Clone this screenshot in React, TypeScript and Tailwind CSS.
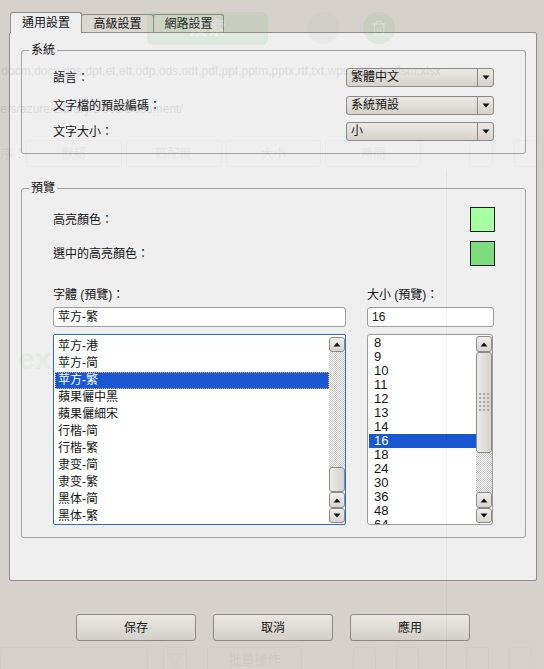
import { Filter, Trash2 } from "lucide-react"

const fonts = [
  "苹方-港",
  "苹方-简",
  "苹方-繁",
  "蘋果儷中黑",
  "蘋果儷細宋",
  "行楷-简",
  "行楷-繁",
  "隶变-简",
  "隶变-繁",
  "黑体-简",
  "黑体-繁",
]

const sizes = ["8", "9", "10", "11", "12", "13", "14", "16", "18", "24", "30", "36", "48", "64"]

function Tri({ up = false }: { up?: boolean }) {
  return (
    <svg width="8" height="5" viewBox="0 0 8 5">
      <path d={up ? "M0.5 4.5H7.5L4 0.5Z" : "M0.5 0.5H7.5L4 4.5Z"} fill="#111" />
    </svg>
  )
}

function ArrowBtn({ up = false, className = "" }: { up?: boolean; className?: string }) {
  return (
    <div
      className={`flex items-center justify-center rounded-[3px] border border-[#8a8a8a] bg-gradient-to-b from-[#f1efeb] to-[#d9d5ce] ${className}`}
    >
      <Tri up={up} />
    </div>
  )
}

function Combo({ value }: { value: string }) {
  return (
    <div className="flex h-[19px] w-[148px] rounded-[3px] border border-[#8a8a8a] bg-gradient-to-b from-[#ebe8e3] to-[#d7d3cb]">
      <div className="flex-1 pl-[4px] leading-[17px]">{value}</div>
      <div className="flex w-[16px] items-center justify-center border-l border-[#8a8a8a]">
        <Tri />
      </div>
    </div>
  )
}

function GroupBox({ title, className, children }: { title: string; className: string; children: React.ReactNode }) {
  return (
    <div className={`relative ml-[11px] w-[505px] rounded-[3px] border border-[#a2a2a2] ${className}`}>
      {/* title sits on the border line */}
      <span className="absolute -top-[9px] left-[7px] bg-[#efefef] px-[2px] leading-[16px]">{title}</span>
      {children}
    </div>
  )
}

const hatch =
  "bg-[image:repeating-conic-gradient(#c8c8c8_0%_25%,#f6f6f6_0%_50%)] bg-[length:2px_2px]"

function Ghost() {
  return (
    <div className="pointer-events-none absolute inset-0 z-20">
      {/* faded app behind the dialog */}
      <div className="absolute left-[147px] top-[12px] flex h-[33px] w-[121px] items-center justify-center rounded-[6px] bg-[#52b352] text-[18px] font-bold text-white opacity-[0.1]">
        搜索
      </div>
      <div className="absolute left-[307px] top-[12px] h-[32px] w-[32px] rounded-full bg-[#9c9c9c] opacity-[0.07]" />
      <div className="absolute left-[363px] top-[12px] flex h-[32px] w-[32px] items-center justify-center rounded-full bg-[#52b352] opacity-[0.1]">
        <Trash2 size={16} color="#fff" />
      </div>
      <div className="absolute left-[-2px] top-[62px] whitespace-nowrap text-[12px] text-[#555] opacity-[0.12]">
        ,docm,docx,dps,dpt,et,ett,odp,ods,odt,pdf,ppt,pptm,pptx,rtf,txt,wps,wpt,xls,xlsm,xlsx
      </div>
      <div className="absolute left-0 top-[100px] whitespace-nowrap text-[12px] text-[#555] opacity-[0.12]">
        ers/azure/Library/Docu/Document/
      </div>
      <div className="absolute left-0 top-[140px] flex h-[27px] w-[544px] items-center opacity-[0.06]">
        <span className="w-[26px] text-[13px] text-[#444]">序：</span>
        <div className="flex h-[27px] w-[96px] items-center justify-center rounded-[3px] border border-[#999] text-[#444]">默認</div>
        <div className="ml-[4px] flex h-[27px] w-[96px] items-center justify-center rounded-[3px] border border-[#999] text-[#444]">匹配度</div>
        <div className="ml-[4px] flex h-[27px] w-[96px] items-center justify-center rounded-[3px] border border-[#999] text-[#444]">大小</div>
        <div className="ml-[4px] flex h-[27px] w-[96px] items-center justify-center rounded-[3px] border border-[#999] text-[#444]">時間</div>
        <div className="ml-[48px] h-[27px] w-[24px] rounded-[3px] border border-[#999]" />
        <div className="ml-[21px] h-[27px] w-[30px] rounded-[3px] border border-[#999]" />
      </div>
      <div className="absolute left-[446px] top-[170px] h-[499px] w-px bg-[#000] opacity-[0.04]" />
      <div className="absolute left-[18px] top-[336px] text-[30px] font-bold text-[#4caf50] opacity-[0.06]">extS</div>
      <div className="absolute left-0 top-[647px] flex h-[26px] w-[544px] items-start opacity-[0.08]">
        <div className="h-[26px] w-[148px] rounded-[3px] border border-[#999]" />
        <div className="ml-[15px] flex h-[26px] w-[24px] items-center justify-center rounded-[3px] border border-[#999]">
          <Filter size={16} color="#777" strokeWidth={1.2} />
        </div>
        <div className="ml-[20px] flex h-[26px] w-[95px] items-center justify-center rounded-[3px] border border-[#999] text-[13px] text-[#555]">
          批量操作
        </div>
        <div className="ml-[51px] h-[26px] w-[23px] rounded-[3px] border border-[#999]" />
        <div className="ml-[20px] h-[26px] w-[23px] rounded-[3px] border border-[#999]" />
        <div className="ml-[47px] h-[26px] w-[23px] rounded-[3px] border border-[#999]" />
        <div className="ml-[20px] h-[26px] w-[23px] rounded-[3px] border border-[#999]" />
      </div>
    </div>
  )
}

export default function App() {
  return (
    <div className="relative h-[669px] w-[544px] overflow-hidden bg-[#d6d2cb] font-['Liberation_Sans','Noto_Sans_CJK_TC',sans-serif] text-[12px] text-[#151515]">
      {/* tabs */}
      <div className="flex h-[32px] items-end pl-[10px]">
        <div className="relative z-10 -mb-px flex h-[21px] w-[72px] items-center justify-center rounded-t-[3px] border-x border-t border-[#8a8a8a] bg-[#efefef] pb-[1px]">
          通用設置
        </div>
        <div className="-ml-px flex h-[18px] w-[73px] items-center justify-center rounded-t-[3px] border-x border-t border-[#8a8a8a] bg-[#dbd7d1]">
          高級設置
        </div>
        <div className="-ml-px flex h-[18px] w-[71px] items-center justify-center rounded-t-[3px] border-x border-t border-[#8a8a8a] bg-[#dbd7d1]">
          網路設置
        </div>
      </div>

      {/* panel */}
      <div className="ml-[9px] h-[549px] w-[528px] rounded-[2px] border border-[#8e8e8e] bg-[#efefef]">
        <GroupBox title="系統" className="mt-[17px] h-[104px]">
          <div className="pl-[31px] pr-[31px] pt-[17px]">
            <div className="flex h-[19px] items-center justify-between">
              <span>語言：</span>
              <Combo value="繁體中文" />
            </div>
            <div className="mt-[9px] flex h-[19px] items-center justify-between">
              <span>文字檔的預設編碼：</span>
              <Combo value="系統預設" />
            </div>
            <div className="mt-[7px] flex h-[19px] items-center justify-between">
              <span>文字大小：</span>
              <Combo value="小" />
            </div>
          </div>
        </GroupBox>

        <GroupBox title="預覽" className="mt-[34px] h-[350px]">
          <div className="pl-[31px] pr-[30px] pt-[18px]">
            <div className="flex h-[25px] items-center justify-between">
              <span>高亮顏色：</span>
              <div className="h-[25px] w-[25px] border border-[#1c1c1c] bg-[#a6ffa2]" />
            </div>
            <div className="mt-[9px] flex h-[25px] items-center justify-between">
              <span>選中的高亮顏色：</span>
              <div className="h-[25px] w-[25px] border border-[#1c1c1c] bg-[#7edb7e]" />
            </div>

            <div className="mt-[21px] flex gap-[21px]">
              {/* font column */}
              <div className="flex w-[293px] flex-col">
                <div className="h-[16px] leading-[16px]">字體 (預覽)：</div>
                <div className="mt-[4px] h-[20px] rounded-[3px] border border-[#9c9c9c] bg-white pl-[4px] leading-[18px]">
                  苹方-繁
                </div>
                <div className="mt-[7px] flex h-[191px] rounded-[2px] border border-[#3568cf] bg-white">
                  <div className="flex-1 overflow-hidden pl-px pt-[3px]">
                    {fonts.map((f, i) =>
                      i === 2 ? (
                        <div
                          key={f}
                          className="h-[17px] bg-[#1a58d1] pl-[3px] leading-[17px] text-white outline-1 -outline-offset-1 outline-dotted outline-[#e8b34a]"
                        >
                          {f}
                        </div>
                      ) : (
                        <div key={f} className="h-[17px] pl-[3px] leading-[17px]">
                          {f}
                        </div>
                      )
                    )}
                  </div>
                  <div className="flex w-[16px] flex-col pb-[1px] pt-[2px]">
                    <ArrowBtn up className="h-[15px]" />
                    <div className={`flex-1 ${hatch}`} />
                    <div className="h-[25px] rounded-[3px] border border-[#8a8a8a] bg-gradient-to-r from-[#ecebe7] to-[#d6d2cb]" />
                    <ArrowBtn up className="h-[16px]" />
                    <ArrowBtn className="h-[15px]" />
                  </div>
                </div>
              </div>

              {/* size column */}
              <div className="flex w-[127px] flex-col">
                <div className="h-[16px] leading-[16px]">大小 (預覽)：</div>
                <div className="mt-[4px] h-[20px] rounded-[3px] border border-[#9c9c9c] bg-white pl-[4px] leading-[18px]">
                  16
                </div>
                <div className="mt-[7px] flex h-[191px] w-[126px] rounded-[3px] border border-[#9c9c9c] bg-white">
                  <div className="flex-1 overflow-hidden pl-px pt-px">
                    {sizes.map((s) =>
                      s === "16" ? (
                        <div key={s} className="h-[14px] bg-[#1a58d1] pl-[5px] text-[13px] leading-[14px] text-white">
                          {s}
                        </div>
                      ) : (
                        <div key={s} className="h-[14px] pl-[5px] text-[13px] leading-[14px]">
                          {s}
                        </div>
                      )
                    )}
                  </div>
                  <div className="flex w-[16px] flex-col pb-[1px] pt-px">
                    <ArrowBtn up className="h-[16px]" />
                    <div className="flex h-[101px] items-center justify-center rounded-[3px] border border-[#8a8a8a] bg-gradient-to-r from-[#ecebe7] to-[#d6d2cb]">
                      <svg width="11" height="19" viewBox="0 0 11 19">
                        {[0, 1, 2].map((c) =>
                          [0, 1, 2, 3, 4].map((r) => (
                            <rect key={`${c}-${r}`} x={c * 4} y={r * 4} width="2" height="2" fill="#a8a8a8" />
                          ))
                        )}
                      </svg>
                    </div>
                    <div className={`flex-1 ${hatch}`} />
                    <ArrowBtn up className="h-[16px]" />
                    <ArrowBtn className="h-[15px]" />
                  </div>
                </div>
              </div>
            </div>
          </div>
        </GroupBox>
      </div>

      {/* dialog buttons */}
      <div className="mt-[33px] flex gap-[17px] pl-[76px]">
        <button className="h-[27px] w-[120px] rounded-[3px] border border-[#8a8a8a] bg-gradient-to-b from-[#ebe8e3] to-[#d3cfc8]">保存</button>
        <button className="h-[27px] w-[120px] rounded-[3px] border border-[#8a8a8a] bg-gradient-to-b from-[#ebe8e3] to-[#d3cfc8]">取消</button>
        <button className="h-[27px] w-[120px] rounded-[3px] border border-[#8a8a8a] bg-gradient-to-b from-[#ebe8e3] to-[#d3cfc8]">應用</button>
      </div>

      <Ghost />
    </div>
  )
}
